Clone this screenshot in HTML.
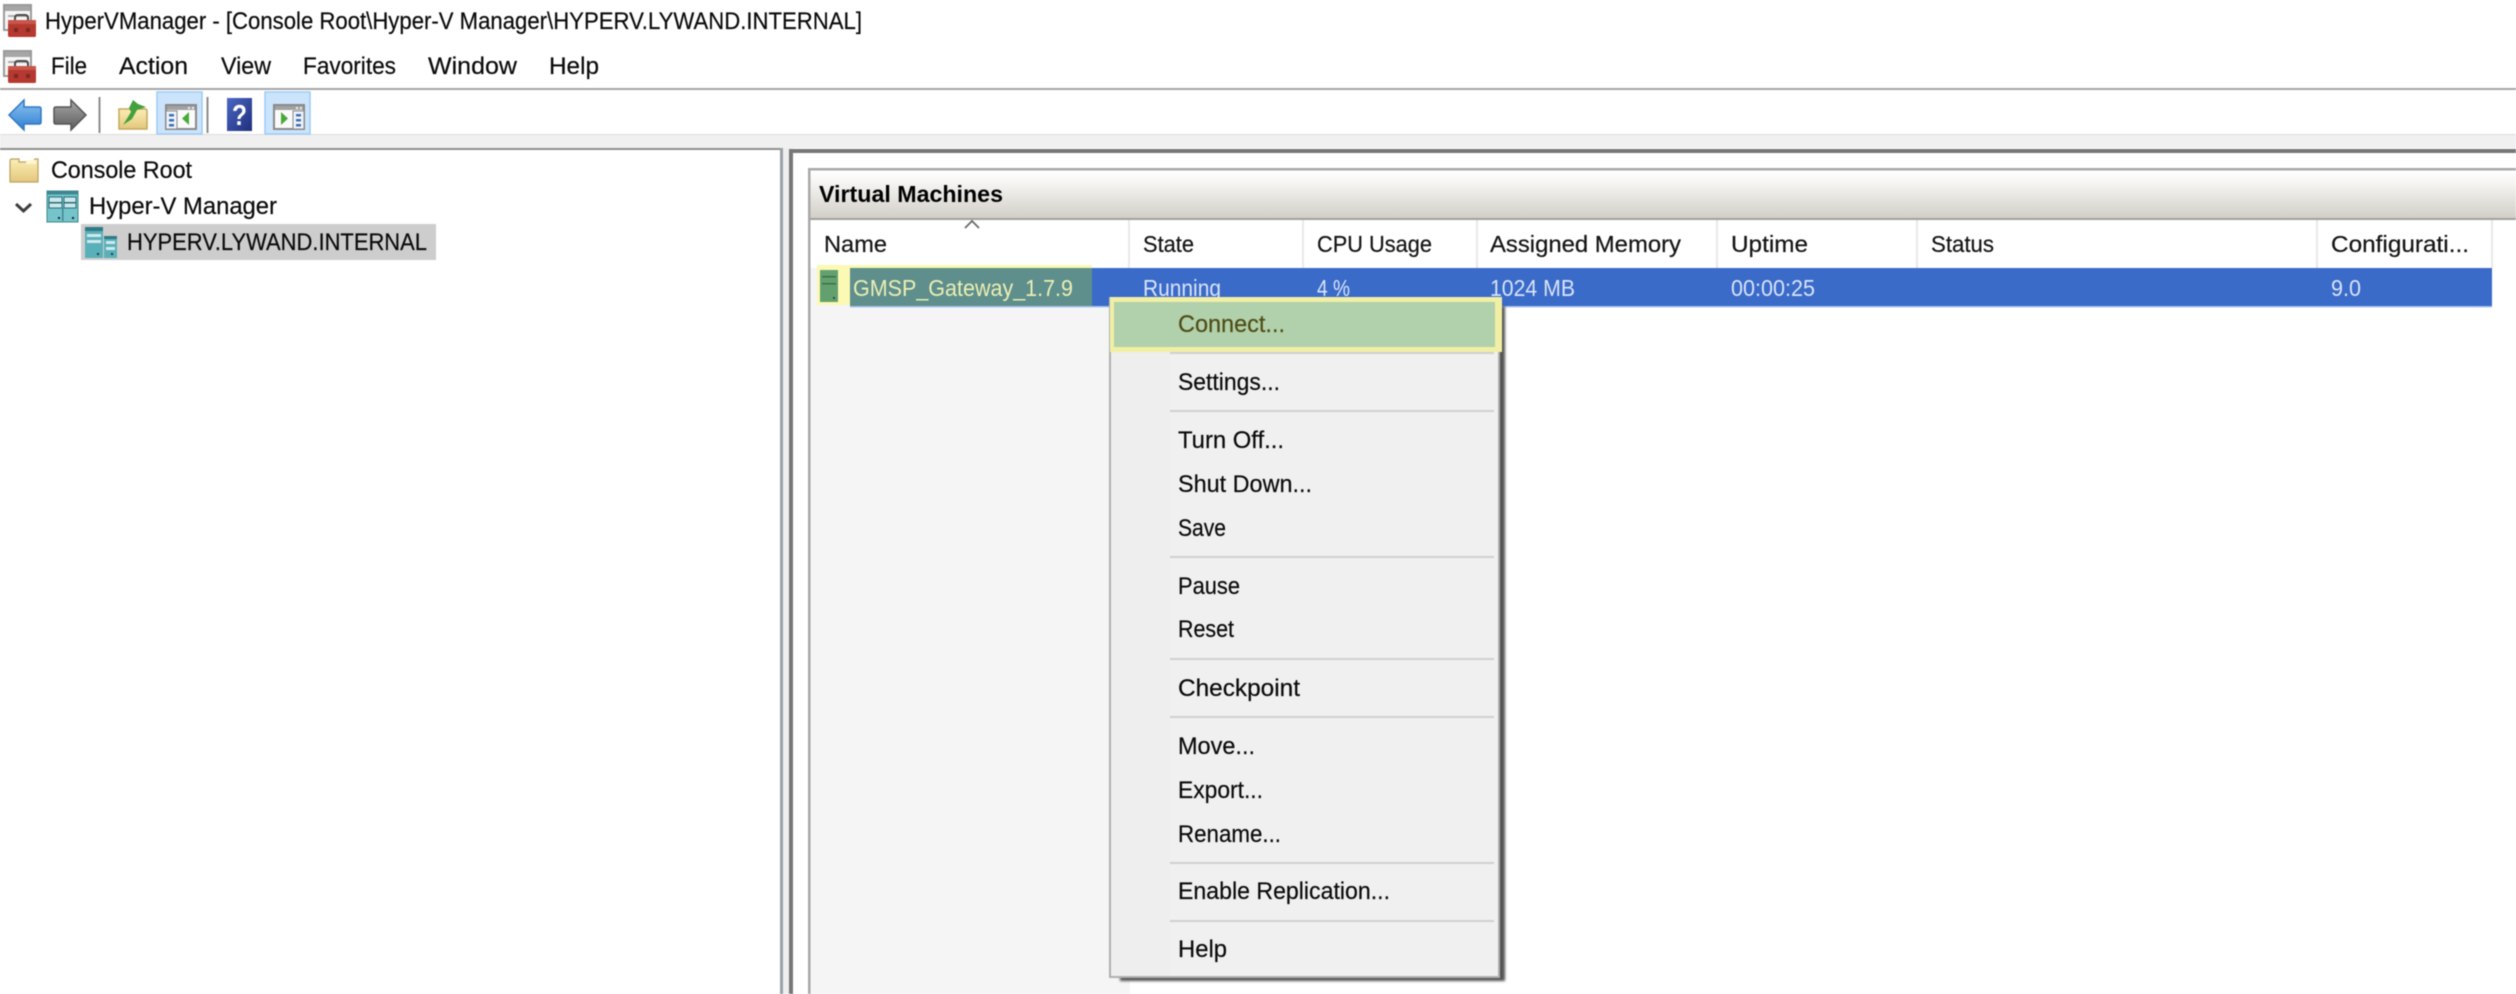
<!DOCTYPE html>
<html><head><meta charset="utf-8"><title>HyperVManager</title>
<style>
html,body{margin:0;padding:0;background:#fff;width:2516px;height:994px;overflow:hidden}
svg{display:block;position:absolute;left:0;top:0;filter:blur(.5px)}
text{font-family:"Liberation Sans",sans-serif;font-size:24px;fill:#0a0a0a;stroke:#0a0a0a;stroke-width:.2px;white-space:pre}
.h{font-size:23px;fill:#141414;stroke:#141414}
.r{font-size:23px;fill:#d9e3f7;stroke:none}
.shadow{filter:blur(1.2px)}
</style></head><body>
<svg width="2516" height="994" viewBox="0 0 2516 994" xmlns="http://www.w3.org/2000/svg">
<defs>
<linearGradient id="hd" x1="0" y1="0" x2="0" y2="1"><stop offset="0" stop-color="#ffffff"/><stop offset=".25" stop-color="#f6f5f3"/><stop offset="1" stop-color="#d2cfc7"/></linearGradient>
<linearGradient id="fo" x1="0" y1="0" x2="0" y2="1"><stop offset="0" stop-color="#fbeeb6"/><stop offset="1" stop-color="#e3c77c"/></linearGradient>
<linearGradient id="bk" x1="0" y1="0" x2="0" y2="1"><stop offset="0" stop-color="#8cc4f2"/><stop offset="1" stop-color="#2f7fd0"/></linearGradient>
<linearGradient id="fw" x1="0" y1="0" x2="0" y2="1"><stop offset="0" stop-color="#a8a8a8"/><stop offset="1" stop-color="#5c5c5c"/></linearGradient>
<linearGradient id="hp" x1="0" y1="0" x2="1" y2="1"><stop offset="0" stop-color="#4a67c4"/><stop offset="1" stop-color="#1f2f7c"/></linearGradient>
<g id="app">
<rect x="0" y="0" width="27" height="25" fill="#f6f6f6" stroke="#9a9a9a" stroke-width="2"/>
<rect x="1" y="1" width="25" height="5" fill="#a6a6a6"/>
<rect x="4" y="10" width="19" height="2" fill="#b0b0b0"/>
<rect x="4" y="15" width="5" height="5" fill="#bcbcbc"/>
<path d="M11 15v-2q0-3 3-3h7q3 0 3 3v2" fill="none" stroke="#4a4a4a" stroke-width="2"/>
<rect x="4" y="15" width="28" height="17" rx="1.500" fill="#b5392f"/>
<rect x="4" y="15" width="28" height="4" fill="#c9564a"/>
<rect x="10" y="23" width="4" height="4" fill="#7a2a24"/>
<rect x="22" y="23" width="4" height="4" fill="#7a2a24"/>
</g>
<g id="win">
<rect x="1" y="1" width="30" height="24" fill="#fafafa" stroke="#8a8a8a" stroke-width="2"/>
<rect x="2" y="2" width="28" height="4" fill="#a2a2a2"/>
<rect x="23" y="3" width="2" height="2" fill="#eee"/><rect x="27" y="3" width="2" height="2" fill="#eee"/>
</g>
</defs>

<!-- chrome -->
<rect x="0" y="0" width="2516" height="994" fill="#fff"/>
<rect x="0" y="88" width="2516" height="2" fill="#a6a6a6"/>
<rect x="0" y="135" width="2516" height="13" fill="#f0f0f0"/>
<rect x="0" y="134" width="2516" height="1" fill="#dedede"/>
<rect x="0" y="148" width="780" height="2" fill="#8f8f8f"/>
<rect x="780" y="148" width="13" height="846" fill="#eeeeee"/>
<rect x="780" y="148" width="3" height="846" fill="#98a0a8"/>
<rect x="789" y="149" width="4" height="845" fill="#777"/>
<rect x="789" y="149" width="1727" height="4" fill="#777"/>
<rect x="793" y="153" width="1723" height="841" fill="#fff"/>

<!-- title + menu -->
<use href="#app" x="4" y="5"/>
<text x="45" y="29" textLength="817" lengthAdjust="spacingAndGlyphs">HyperVManager - [Console Root\Hyper-V Manager\HYPERV.LYWAND.INTERNAL]</text>
<use href="#app" x="4" y="51"/>
<text x="51" y="74" textLength="36" lengthAdjust="spacingAndGlyphs">File</text>
<text x="119" y="74" textLength="69" lengthAdjust="spacingAndGlyphs">Action</text>
<text x="221" y="74" textLength="50" lengthAdjust="spacingAndGlyphs">View</text>
<text x="303" y="74" textLength="93" lengthAdjust="spacingAndGlyphs">Favorites</text>
<text x="428" y="74" textLength="89" lengthAdjust="spacingAndGlyphs">Window</text>
<text x="549" y="74" textLength="50" lengthAdjust="spacingAndGlyphs">Help</text>

<!-- toolbar -->
<path d="M9 115 L24 100 L24 107 L39 107 Q41 107 41 109 L41 122 Q41 124 39 124 L24 124 L24 130 Z" fill="url(#bk)" stroke="#2f77c4" stroke-width="1.500"/>
<path d="M86 115 L71 100 L71 107 L56 107 Q54 107 54 109 L54 122 Q54 124 56 124 L71 124 L71 130 Z" fill="url(#fw)" stroke="#555" stroke-width="1.500"/>
<rect x="98.500" y="97" width="2" height="36" fill="#8c8c8c"/>
<path d="M119 109h26q2 0 2 2v18h-28z" fill="url(#fo)" stroke="#c4a85c" stroke-width="1.500"/>
<path d="M123 125 L131 112 L129 108 L133 100 L138 104 L146 107 L137 110 L132 119 Z" fill="#44a03c"/>
<rect x="157" y="92" width="45" height="42" fill="#cce4fb" stroke="#9ecbf5" stroke-width="1.500"/>
<use href="#win" x="165" y="104"/>
<rect x="166" y="111" width="11" height="18" fill="#eef3f8" stroke="#8a8a8a"/>
<rect x="169" y="114" width="5" height="2.500" fill="#3f6fb4"/><rect x="169" y="119" width="5" height="2.500" fill="#3f6fb4"/><rect x="169" y="124" width="5" height="2.500" fill="#3f6fb4"/>
<path d="M189 112v13l-7-6.500z" fill="#4aa83a"/>
<rect x="206.500" y="97" width="2" height="36" fill="#8c8c8c"/>
<rect x="227" y="98" width="25" height="33" fill="url(#hp)"/>
<text x="232" y="125" style="font-size:29px;font-weight:bold;fill:#fff;stroke:none" textLength="15" lengthAdjust="spacingAndGlyphs">?</text>
<rect x="265" y="92" width="45" height="42" fill="#cce4fb" stroke="#9ecbf5" stroke-width="1.500"/>
<use href="#win" x="273" y="104"/>
<rect x="293" y="111" width="11" height="18" fill="#eef3f8" stroke="#8a8a8a"/>
<rect x="296" y="114" width="5" height="2.500" fill="#3f6fb4"/><rect x="296" y="119" width="5" height="2.500" fill="#3f6fb4"/><rect x="296" y="124" width="5" height="2.500" fill="#3f6fb4"/>
<path d="M281 112v13l7-6.500z" fill="#4aa83a"/>

<!-- tree -->
<path d="M10 161q0-2 2-2h7v3h14l2-3h3v23H10z" fill="url(#fo)" stroke="#b9a263" stroke-width="1.200"/>
<path d="M26 160h10v4H26z" fill="#fff6cf"/>
<text x="51" y="178" textLength="141" lengthAdjust="spacingAndGlyphs">Console Root</text>
<path d="M16 204l7.500 7 7.500-7" fill="none" stroke="#3d3d3d" stroke-width="3"/>
<rect x="47" y="191" width="31" height="31" fill="#75c4cb" stroke="#3f8790" stroke-width="1"/>
<rect x="47" y="191" width="31" height="3.500" fill="#3f8790"/>
<rect x="49" y="197" width="13" height="11" fill="#c9e9ec" stroke="#2f6b74" stroke-width="1"/>
<rect x="64" y="197" width="12" height="11" fill="#c9e9ec" stroke="#2f6b74" stroke-width="1"/>
<rect x="49" y="202" width="13" height="1.500" fill="#2f6b74"/><rect x="64" y="202" width="12" height="1.500" fill="#2f6b74"/>
<rect x="62" y="208" width="1.500" height="13" fill="#3f8790"/>
<rect x="58" y="217" width="2" height="2" fill="#222"/><rect x="72" y="217" width="2" height="2" fill="#222"/>
<text x="89" y="214" textLength="188" lengthAdjust="spacingAndGlyphs">Hyper-V Manager</text>
<rect x="81" y="224" width="355" height="36" fill="#cdcdcd"/>
<rect x="85" y="227" width="18" height="31" fill="#5ab0b8"/>
<rect x="85" y="227" width="18" height="4" fill="#2f7a84"/>
<rect x="87" y="234" width="14" height="3" fill="#cfeaee"/><rect x="87" y="240" width="14" height="3" fill="#cfeaee"/>
<rect x="104" y="236" width="13" height="22" fill="#5ab0b8"/>
<rect x="104" y="236" width="13" height="3" fill="#2f7a84"/>
<rect x="106" y="241" width="9" height="3" fill="#cfeaee"/><rect x="106" y="247" width="9" height="3" fill="#cfeaee"/>
<rect x="97" y="253" width="2" height="2" fill="#173c42"/><rect x="111" y="253" width="2" height="2" fill="#173c42"/>
<text x="127" y="250" textLength="300" lengthAdjust="spacingAndGlyphs">HYPERV.LYWAND.INTERNAL</text>

<!-- VM panel -->
<rect x="808" y="168" width="2.500" height="826" fill="#a8a8a8"/>
<rect x="808" y="168" width="1708" height="2.500" fill="#a8a8a8"/>
<rect x="810.500" y="170.500" width="1705.500" height="47.500" fill="url(#hd)"/>
<rect x="810.500" y="218" width="1705.500" height="2" fill="#a0a0a0"/>
<text x="819" y="202" style="font-weight:bold;font-size:23px;fill:#000;stroke:none" textLength="184" lengthAdjust="spacingAndGlyphs">Virtual Machines</text>
<g fill="#e8e8e8">
<rect x="1128" y="220" width="2" height="48"/><rect x="1302" y="220" width="2" height="48"/><rect x="1476" y="220" width="2" height="48"/><rect x="1716" y="220" width="2" height="48"/><rect x="1916" y="220" width="2" height="48"/><rect x="2316" y="220" width="2" height="48"/><rect x="2491" y="220" width="2" height="48"/>
</g>
<path d="M965 228l7-7 7 7" fill="none" stroke="#6a6a6a" stroke-width="1.800"/>
<text class="h" x="824" y="252" textLength="63" lengthAdjust="spacingAndGlyphs">Name</text>
<text class="h" x="1143" y="252" textLength="51" lengthAdjust="spacingAndGlyphs">State</text>
<text class="h" x="1317" y="252" textLength="115" lengthAdjust="spacingAndGlyphs">CPU Usage</text>
<text class="h" x="1490" y="252" textLength="191" lengthAdjust="spacingAndGlyphs">Assigned Memory</text>
<text class="h" x="1731" y="252" textLength="77" lengthAdjust="spacingAndGlyphs">Uptime</text>
<text class="h" x="1931" y="252" textLength="63" lengthAdjust="spacingAndGlyphs">Status</text>
<text class="h" x="2331" y="252" textLength="138" lengthAdjust="spacingAndGlyphs">Configurati...</text>

<rect x="810.500" y="268" width="319.500" height="726" fill="#f5f5f5"/>
<rect x="1092" y="268" width="1400" height="38" fill="#3a6bc9"/>
<rect x="850" y="306" width="1642" height="1.500" fill="#a9c4ee"/>
<rect x="817" y="265" width="275" height="3" fill="#fbf9b4"/>
<rect x="817" y="265" width="33" height="40" fill="#fbf9b4"/>
<rect x="850" y="268" width="242" height="38" fill="#5e8f8c"/>
<rect x="820" y="270" width="18" height="32" fill="#63a070"/>
<rect x="822" y="276" width="14" height="1.500" fill="#3d6f4c"/><rect x="822" y="283" width="14" height="1.500" fill="#3d6f4c"/>
<rect x="833" y="297" width="2" height="2" fill="#2a5238"/>
<text x="853" y="296" style="font-size:23px;fill:#ecefb4;stroke:none" textLength="220" lengthAdjust="spacingAndGlyphs">GMSP_Gateway_1.7.9</text>
<text class="r" x="1143" y="296" textLength="78" lengthAdjust="spacingAndGlyphs">Running</text>
<text class="r" x="1317" y="296" textLength="33" lengthAdjust="spacingAndGlyphs">4 %</text>
<text class="r" x="1490" y="296" textLength="85" lengthAdjust="spacingAndGlyphs">1024 MB</text>
<text class="r" x="1731" y="296" textLength="84" lengthAdjust="spacingAndGlyphs">00:00:25</text>
<text class="r" x="2331" y="296" textLength="30" lengthAdjust="spacingAndGlyphs">9.0</text>

<!-- context menu -->
<rect class="shadow" x="1120" y="306" width="385" height="675" fill="#555"/>
<rect x="1109" y="297" width="391" height="681" fill="#b0b0b0"/>
<rect x="1111" y="299" width="387" height="677" fill="#f0f0f0"/>
<rect x="1111" y="299" width="59" height="677" fill="#eeeeee"/>
<rect x="1110" y="297" width="392" height="55" fill="#f1efa4"/>
<rect x="1114" y="302" width="381" height="45" fill="#b1d0ac"/>
<g fill="#d0d0d0">
<rect x="1170" y="352" width="324" height="2"/><rect x="1170" y="410" width="324" height="2"/><rect x="1170" y="556" width="324" height="2"/><rect x="1170" y="658" width="324" height="2"/><rect x="1170" y="716" width="324" height="2"/><rect x="1170" y="862" width="324" height="2"/><rect x="1170" y="920" width="324" height="2"/>
</g>
<text x="1178" y="332" style="fill:#4f4d14;stroke:#4f4d14" textLength="107" lengthAdjust="spacingAndGlyphs">Connect...</text>
<text x="1178" y="390" textLength="102" lengthAdjust="spacingAndGlyphs">Settings...</text>
<text x="1178" y="448" textLength="106" lengthAdjust="spacingAndGlyphs">Turn Off...</text>
<text x="1178" y="492" textLength="134" lengthAdjust="spacingAndGlyphs">Shut Down...</text>
<text x="1178" y="536" textLength="48" lengthAdjust="spacingAndGlyphs">Save</text>
<text x="1178" y="594" textLength="62" lengthAdjust="spacingAndGlyphs">Pause</text>
<text x="1178" y="637" textLength="56" lengthAdjust="spacingAndGlyphs">Reset</text>
<text x="1178" y="696" textLength="122" lengthAdjust="spacingAndGlyphs">Checkpoint</text>
<text x="1178" y="754" textLength="77" lengthAdjust="spacingAndGlyphs">Move...</text>
<text x="1178" y="798" textLength="85" lengthAdjust="spacingAndGlyphs">Export...</text>
<text x="1178" y="842" textLength="103" lengthAdjust="spacingAndGlyphs">Rename...</text>
<text x="1178" y="899" textLength="212" lengthAdjust="spacingAndGlyphs">Enable Replication...</text>
<text x="1178" y="957" textLength="49" lengthAdjust="spacingAndGlyphs">Help</text>
</svg>
</body></html>
